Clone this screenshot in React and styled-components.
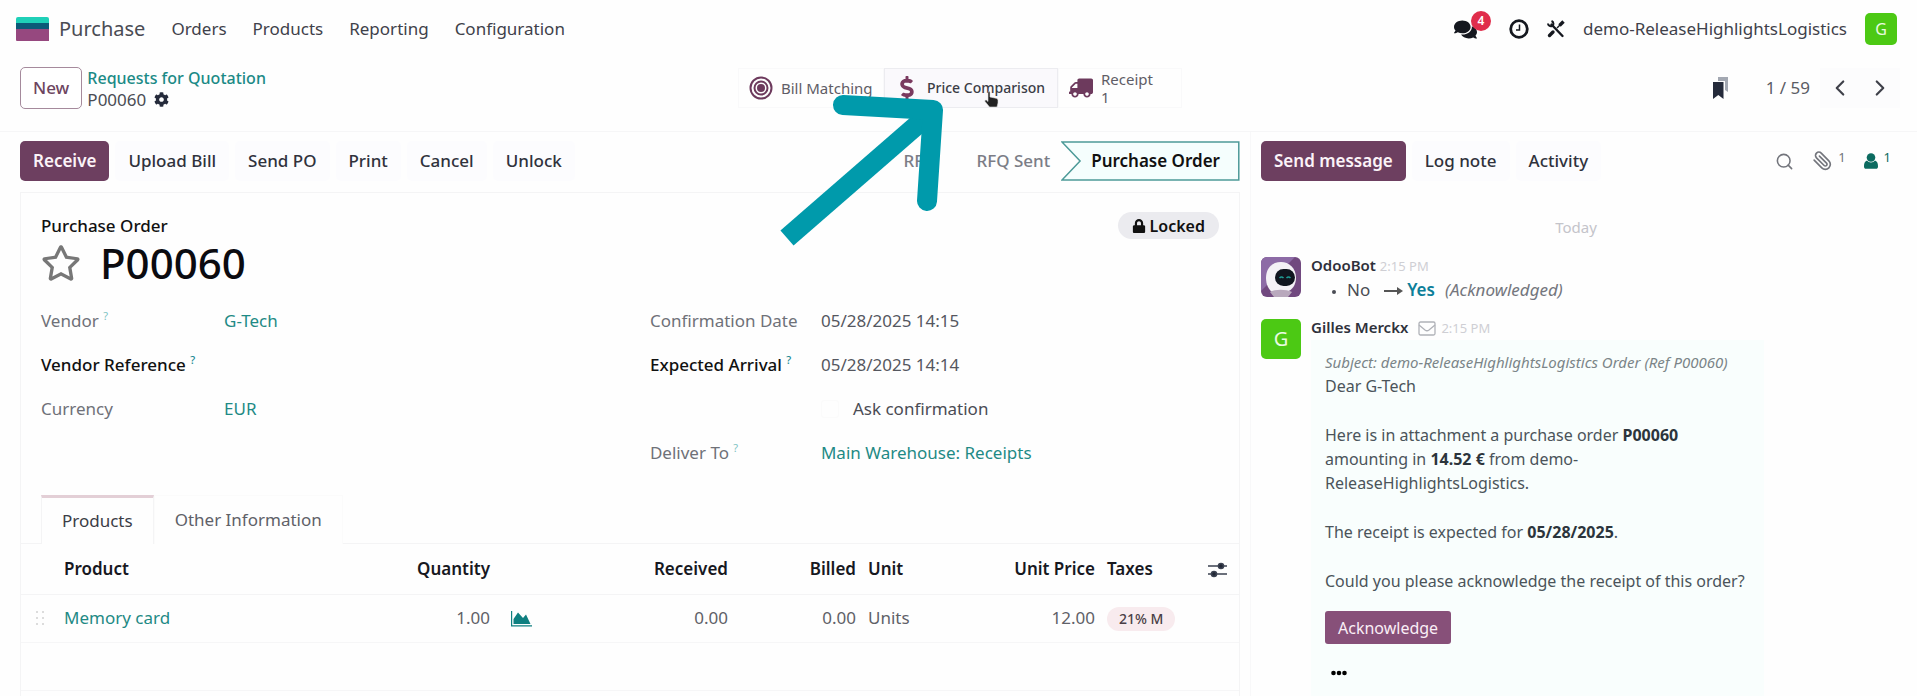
import React from 'react';
import styled, { createGlobalStyle } from 'styled-components';
import { FaComments, FaCog, FaTruck, FaDollarSign, FaLock, FaRegStar } from 'react-icons/fa';
import { FiSearch, FiPaperclip, FiChevronLeft, FiChevronRight } from 'react-icons/fi';

const lines = [
  { product: 'Memory card', qty: '1.00', received: '0.00', billed: '0.00', unit: 'Units', price: '12.00', tax: '21% M' },
];

export default function App() {
  return (
    <Page>
      <GlobalStyle />
      <Navbar />
      <ControlPanel />
      <Content>
        <FormView />
        <Chatter />
      </Content>
      <PointerArrow />
    </Page>
  );
}

function Navbar() {
  return (
    <NavWrapper>
      <Brand href="#purchase">
        <svg width="33" height="24" viewBox="0 0 33 24" aria-hidden="true">
          <path d="M2 0h29a2 2 0 0 1 2 2v5H0V2a2 2 0 0 1 2-2z" fill="#1fd0b8" />
          <rect y="6" width="33" height="7" fill="#0b5a78" />
          <path d="M0 12h33v12H1a1 1 0 0 1-1-1z" fill="#96487f" />
        </svg>
        Purchase
      </Brand>
      <Menu>
        <MenuLink href="#orders">Orders</MenuLink>
        <MenuLink href="#products">Products</MenuLink>
        <MenuLink href="#reporting">Reporting</MenuLink>
        <MenuLink href="#configuration">Configuration</MenuLink>
      </Menu>
      <Systray>
        <MessagesButton aria-label="Messages">
          <FaComments size={23} />
          <Counter>4</Counter>
        </MessagesButton>
        <IconButton aria-label="Activities">
          <svg width="20" height="20" viewBox="0 0 20 20" fill="none" stroke="currentColor">
            <circle cx="10" cy="10" r="8.300" strokeWidth="2.800" />
            <path d="M10.500 5.500v5.500H7" strokeWidth="1.500" />
          </svg>
        </IconButton>
        <IconButton aria-label="Developer tools">
          <svg width="18" height="18" viewBox="0 0 18 18" fill="none" stroke="currentColor">
            <path d="M4.500 4.500L15.500 16" strokeWidth="2.400" strokeLinecap="round" />
            <path d="M1 3.500c0 2 2 3 4 2.500s2-4-.5-5" strokeWidth="2" />
            <path d="M2.500 15.500L6 12" strokeWidth="3.400" strokeLinecap="round" />
            <path d="M10 8l3-3" strokeWidth="1.500" />
            <path d="M12.500 5.500L16.500 1.500" strokeWidth="3.400" />
          </svg>
        </IconButton>
        <UserName>demo-ReleaseHighlightsLogistics</UserName>
        <Avatar $size={32}>G</Avatar>
      </Systray>
    </NavWrapper>
  );
}

function ControlPanel() {
  return (
    <PanelWrapper>
      <PanelSide>
        <NewButton>New</NewButton>
        <Breadcrumb>
          <CrumbLink href="#rfq">Requests for Quotation</CrumbLink>
          <Current>
            P00060
            <IconButton aria-label="Actions">
              <FaCog size={15} />
            </IconButton>
          </Current>
        </Breadcrumb>
      </PanelSide>
      <StatButtons>
        <StatButton $width={146}>
          <svg width="24" height="24" viewBox="0 0 24 24" fill="none" stroke="#6d3a5d" strokeWidth="2">
            <circle cx="12" cy="12" r="10.500" />
            <circle cx="12" cy="12" r="6.500" />
            <circle cx="12" cy="12" r="3" fill="#6d3a5d" />
          </svg>
          Bill Matching
        </StatButton>
        <StatButton $width={174} $active>
          <FaDollarSign size={24} color="#7a3a5f" />
          Price Comparison
          <HandCursor width="15" height="17" viewBox="0 0 15 17">
            <path
              d="M4 1.500c0-1.200 2-1.200 2 0V6l6 1.200c1.300.3 2 1 2 2.300V12l-1 4H5.500L1 10.500c-.6-1 .7-2 1.700-1.200L4 10.500z"
              fill="#222"
              stroke="#ddd"
              strokeWidth=".6"
            />
          </HandCursor>
        </StatButton>
        <StatButton $width={124}>
          <TruckIcon size={24} />
          <span>
            Receipt
            <br />1
          </span>
        </StatButton>
      </StatButtons>
      <PanelSide $end>
        <IconButton aria-label="Bookmarks">
          <svg width="17" height="22" viewBox="0 0 17 22">
            <path d="M6 0h10v15l-3-2V4H6z" fill="#a3a8b2" />
            <path d="M1 5h10.500v17L6.300 18 1 22z" fill="#252b3b" />
          </svg>
        </IconButton>
        <Pager>
          <span>1 / 59</span>
          <PagerButton aria-label="Previous">
            <FiChevronLeft size={26} />
          </PagerButton>
          <PagerButton aria-label="Next">
            <FiChevronRight size={26} />
          </PagerButton>
        </Pager>
      </PanelSide>
    </PanelWrapper>
  );
}

function FormView() {
  return (
    <FormColumn>
      <ActionBar>
        <Button $primary>Receive</Button>
        <Button>Upload Bill</Button>
        <Button>Send PO</Button>
        <Button>Print</Button>
        <Button>Cancel</Button>
        <Button>Unlock</Button>
        <StatusBar>
          <Stage>RFQ</Stage>
          <Stage>RFQ Sent</Stage>
          <CurrentStage>
            <StageShape viewBox="0 0 178 40" preserveAspectRatio="none" aria-hidden="true">
              <path d="M1 1h176v38H1l18-19z" fill="#f5fefd" stroke="#4d9a98" strokeWidth="1.500" />
            </StageShape>
            <StageLabel>Purchase Order</StageLabel>
          </CurrentStage>
        </StatusBar>
      </ActionBar>
      <Sheet>
        <SheetTop>
          <DocType>Purchase Order</DocType>
          <Locked>
            <FaLock size={14} />
            Locked
          </Locked>
        </SheetTop>
        <TitleRow>
          <StarButton aria-label="Priority">
            <FaRegStar size={40} />
          </StarButton>
          <Title>P00060</Title>
        </TitleRow>
        <Groups>
          <Group $label={183}>
            <Label>Vendor <Help>?</Help></Label>
            <Value><FieldLink href="#vendor">G-Tech</FieldLink></Value>
            <Label $strong>Vendor Reference <Help $strong>?</Help></Label>
            <Value />
            <Label>Currency</Label>
            <Value><FieldLink href="#currency">EUR</FieldLink></Value>
          </Group>
          <Group $label={171}>
            <Label>Confirmation Date</Label>
            <Value>05/28/2025 14:15</Value>
            <Label $strong>Expected Arrival <Help $strong>?</Help></Label>
            <Value>05/28/2025 14:14</Value>
            <span />
            <CheckLabel>
              <Checkbox type="checkbox" />
              Ask confirmation
            </CheckLabel>
            <Label>Deliver To <Help>?</Help></Label>
            <Value><FieldLink href="#warehouse">Main Warehouse: Receipts</FieldLink></Value>
          </Group>
        </Groups>
        <Tabs role="tablist">
          <Tab role="tab" aria-selected="true" $active>Products</Tab>
          <Tab role="tab" aria-selected="false">Other Information</Tab>
        </Tabs>
        <OrderTable />
      </Sheet>
    </FormColumn>
  );
}

function OrderTable() {
  return (
    <Table>
      <colgroup>
        <Col $width={37} />
        <col />
        <Col $width={120} />
        <Col $width={50} />
        <Col $width={188} />
        <Col $width={128} />
        <Col $width={118} />
        <Col $width={121} />
        <Col $width={101} />
        <Col $width={37} />
      </colgroup>
      <thead>
        <tr>
          <Th />
          <Th>Product</Th>
          <Th $right>Quantity</Th>
          <Th />
          <Th $right>Received</Th>
          <Th $right>Billed</Th>
          <Th>Unit</Th>
          <Th $right>Unit Price</Th>
          <Th>Taxes</Th>
          <Th>
            <IconButton aria-label="Optional columns">
              <svg width="19" height="18" viewBox="0 0 19 18" stroke="#3b4150" strokeWidth="1.600" fill="#1f2533">
                <path d="M0 5h19M0 13h19" />
                <circle cx="13" cy="5" r="2.500" />
                <circle cx="6" cy="13" r="2.500" />
              </svg>
            </IconButton>
          </Th>
        </tr>
      </thead>
      <tbody>
        {lines.map((line) => (
          <tr key={line.product}>
            <Td $center>
              <svg width="10" height="16" viewBox="0 0 10 16" fill="#dcdcdc" aria-hidden="true">
                <path d="M1 0h2v2H1zM7 0h2v2H7zM1 6h2v2H1zM7 6h2v2H7zM1 12h2v2H1zM7 12h2v2H7z" />
              </svg>
            </Td>
            <Td><FieldLink href="#product">{line.product}</FieldLink></Td>
            <Td $right>{line.qty}</Td>
            <Td $center>
              <IconButton aria-label="Forecast" $color="#0f7f80">
                <svg width="21" height="16" viewBox="0 0 21 16" fill="currentColor">
                  <path d="M0 0h1.200v14.300H21v1.200H0z" />
                  <path d="M2.500 13V8L7 1.500 12 7l3-3.500L19.500 13z" />
                </svg>
              </IconButton>
            </Td>
            <Td $right>{line.received}</Td>
            <Td $right>{line.billed}</Td>
            <Td>{line.unit}</Td>
            <Td $right>{line.price}</Td>
            <Td><Tag>{line.tax}</Tag></Td>
            <Td />
          </tr>
        ))}
        <tr>
          <Td colSpan={10} />
        </tr>
      </tbody>
    </Table>
  );
}

function Chatter() {
  return (
    <ChatterColumn>
      <ActionBar>
        <Button $primary>Send message</Button>
        <Button>Log note</Button>
        <Button>Activity</Button>
        <ChatterTools>
          <IconButton aria-label="Search messages"><FiSearch size={19} /></IconButton>
          <IconButton aria-label="Attachments"><ClipIcon size={20} /><sup>1</sup></IconButton>
          <IconButton aria-label="Followers" $color="#0c6b60">
            <svg width="14" height="16" viewBox="0 0 14 16" fill="currentColor">
              <circle cx="7" cy="4.500" r="4.300" />
              <path d="M3 7.500c2 2.500 6 2.500 8 0 2.500.8 3 3.500 3 6 0 1.500-.8 2.300-2 2.300H2c-1.200 0-2-.8-2-2.300 0-2.500.5-5.200 3-6z" />
            </svg>
            <sup>1</sup>
          </IconButton>
        </ChatterTools>
      </ActionBar>
      <Today>Today</Today>
      <Message>
        <BotAvatar viewBox="0 0 40 40" role="img" aria-label="OdooBot">
          <rect width="40" height="40" rx="6" fill="#71497f" />
          <path d="M0 6a6 6 0 0 1 6-6h28L0 34z" fill="#8d6ba6" />
          <path d="M5 21C5 10 12 5 20 5s15 6 15 16c0 7-4 12-9 14l-14 1C8 33 5 28 5 21z" fill="#f4f1f6" />
          <path d="M9 35c5-3 16-3 22 0l-4 5H13z" fill="#b9a9bd" />
          <rect x="14" y="12" width="20" height="17" rx="8.500" fill="#10151f" />
          <path d="M18.500 21q2-2 4 0M25.500 21q2-2 4 0" stroke="#1f9c95" strokeWidth="1.500" fill="none" />
        </BotAvatar>
        <MessageBody>
          <Author>OdooBot <Time>2:15 PM</Time></Author>
          <Tracking>
            <li>
              <span>No</span>
              <svg width="19" height="10" viewBox="0 0 19 10" fill="#555" aria-hidden="true">
                <path d="M0 4h13V1l6 4-6 4V6H0z" />
              </svg>
              <NewValue>Yes</NewValue>
              <i>(Acknowledged)</i>
            </li>
          </Tracking>
        </MessageBody>
      </Message>
      <Message>
        <Avatar $size={40}>G</Avatar>
        <MessageBody>
          <Author>
            Gilles Merckx
            <svg width="18" height="15" viewBox="0 0 18 15" fill="none" stroke="currentColor" strokeWidth="1.300" aria-hidden="true">
              <rect x="1" y="1" width="16" height="13" rx="1.500" />
              <path d="M1 4l6 5q2 1.500 4 0l6-5" />
            </svg>
            <Time>2:15 PM</Time>
          </Author>
          <Bubble>
            <Subject>Subject: demo-ReleaseHighlightsLogistics Order (Ref P00060)</Subject>
            <p>Dear G-Tech</p>
            <p>
              Here is in attachment a purchase order <b>P00060</b>
              <br />
              amounting in <b>14.52 €</b> from demo-
              <br />
              ReleaseHighlightsLogistics.
            </p>
            <p>The receipt is expected for <b>05/28/2025</b>.</p>
            <p>Could you please acknowledge the receipt of this order?</p>
            <AckButton>Acknowledge</AckButton>
            <MoreButton aria-label="More">
              <svg width="16" height="6" viewBox="0 0 16 6">
                <circle cx="2.500" cy="3" r="2.300" />
                <circle cx="8" cy="3" r="2.300" />
                <circle cx="13.500" cy="3" r="2.300" />
              </svg>
            </MoreButton>
          </Bubble>
        </MessageBody>
      </Message>
    </ChatterColumn>
  );
}

// big callout that lies over the page and points to Price Comparison
function PointerArrow() {
  return (
    <Callout viewBox="0 0 163 152" fill="none" stroke="#009aab" strokeWidth="20" aria-hidden="true">
      <path d="M7 144L152 18" />
      <path d="M63 11l90 5-6 91" strokeLinecap="round" strokeLinejoin="round" />
    </Callout>
  );
}

const GlobalStyle = createGlobalStyle`
*{
    box-sizing:border-box;
}
body{
    margin:0;
    background:#fefefe;
    color:#4a4c54;
    font-family:"Noto Sans","Open Sans",sans-serif;
    font-size:17px;
    line-height:24px;
}
button{
    font:inherit;
    cursor:pointer;
}
a{
    text-decoration:none;
}
`;

const Page = styled.div`
position:relative;
display:flex;
flex-direction:column;
min-height:100vh;
overflow:hidden;
`;

const NavWrapper = styled.header`
display:flex;
align-items:center;
height:58px;
padding:0 20px 0 16px;
`;

const Brand = styled.a`
display:flex;
align-items:center;
gap:10px;
color:#4a4c54;
font-size:20px;
`;

const Menu = styled.nav`
display:flex;
gap:26px;
margin-left:26px;
`;

const MenuLink = styled.a`
color:#3f414a;
`;

const Systray = styled.div`
display:flex;
align-items:center;
gap:18px;
margin-left:auto;
color:#15181f;
`;

const IconButton = styled.button`
position:relative;
display:inline-flex;
align-items:center;
padding:0;
border:0;
background:none;
color:${(props) => props.$color || 'inherit'};
vertical-align:middle;
sup{
    margin:-8px 0 0 6px;
    font-size:13px;
    line-height:12px;
}
`;

const MessagesButton = styled(IconButton)`
margin-right:14px;
`;

const Counter = styled.span`
position:absolute;
top:-7px;
right:-14px;
width:20px;
height:20px;
border-radius:50%;
background:#e02d4b;
color:#fff;
font-size:12px;
font-weight:600;
line-height:20px;
text-align:center;
`;

const UserName = styled.span`
color:#3f414a;
`;

const Avatar = styled.div`
flex:none;
display:flex;
align-items:center;
justify-content:center;
width:${(props) => props.$size}px;
height:${(props) => props.$size}px;
border-radius:5px;
background:#4cc914;
color:#e9fbe0;
font-size:${(props) => (props.$size > 32 ? 20 : 16)}px;
`;

const PanelWrapper = styled.div`
display:grid;
grid-template-columns:1fr auto 1fr;
align-items:center;
height:74px;
padding:0 17px 14px 20px;
border-bottom:1px solid #f6f6f7;
`;

const PanelSide = styled.div`
display:flex;
align-items:center;
justify-content:${(props) => (props.$end ? 'flex-end' : 'flex-start')};
gap:${(props) => (props.$end ? 37 : 5)}px;
`;

const NewButton = styled.button`
height:42px;
padding:0 12px;
border:1px solid #a58a9c;
border-radius:5px;
background:#fff;
color:#6d4560;
font-weight:500;
`;

const Breadcrumb = styled.div`
padding-top:2px;
line-height:21px;
`;

const CrumbLink = styled.a`
display:block;
color:#1b8a86;
font-size:16px;
font-weight:500;
`;

const Current = styled.div`
display:flex;
gap:8px;
color:#4a4c54;
svg{
    color:#252b3b;
}
`;

const StatButtons = styled.div`
display:flex;
`;

const StatButton = styled.button`
position:relative;
display:flex;
align-items:center;
gap:8px;
width:${(props) => props.$width}px;
height:40px;
padding:0 10px;
border:1px solid ${(props) => (props.$active ? '#ececf0' : '#f9f9fa')};
background:${(props) => (props.$active ? '#faf9fc' : '#fefefe')};
color:${(props) => (props.$active ? '#3b3d46' : '#5f5d66')};
font-size:${(props) => (props.$active ? 14 : 15)}px;
font-weight:${(props) => (props.$active ? 500 : 400)};
line-height:18px;
text-align:left;
white-space:nowrap;
svg{
    flex:none;
}
`;

const HandCursor = styled.svg`
position:absolute;
top:22px;
left:99px;
`;

const TruckIcon = styled(FaTruck)`
color:#6d3a5d;
transform:scaleX(-1);
`;

const Pager = styled.div`
display:flex;
align-items:center;
color:#5a5c64;
span{
    margin-right:10px;
}
`;

const PagerButton = styled.button`
display:flex;
align-items:center;
justify-content:center;
width:40px;
height:40px;
padding:0;
border:0;
background:#fcfcfd;
color:#3f414a;
`;

const Content = styled.main`
flex:1;
display:grid;
grid-template-columns:1251fr 666fr;
`;

const FormColumn = styled.section`
display:flex;
flex-direction:column;
padding:9px 10px 0 20px;
border-right:1px solid #f8f8f9;
`;

const ActionBar = styled.div`
display:flex;
align-items:center;
gap:6px;
height:40px;
`;

const Button = styled.button`
height:40px;
padding:0 13px;
border:0;
border-radius:5px;
background:${(props) => (props.$primary ? '#6d3f60' : '#fcfcfe')};
color:${(props) => (props.$primary ? '#fbf3f8' : '#30323c')};
font-weight:${(props) => (props.$primary ? 600 : 500)};
white-space:nowrap;
`;

const StatusBar = styled.div`
display:flex;
align-items:center;
height:40px;
margin-left:auto;
`;

const Stage = styled.span`
padding:0 11px 0 29px;
color:#7b7d86;
font-weight:500;
`;

const CurrentStage = styled.div`
position:relative;
padding:8px 20px 8px 30px;
color:#111;
font-weight:600;
`;

const StageShape = styled.svg`
position:absolute;
inset:0;
width:100%;
height:100%;
`;

const StageLabel = styled.span`
position:relative;
`;

const Sheet = styled.div`
flex:1;
margin-top:11px;
border:1px solid #f4f4f5;
border-bottom:0;
`;

const SheetTop = styled.div`
display:flex;
align-items:center;
justify-content:space-between;
padding:19px 20px 0;
`;

const DocType = styled.span`
color:#111;
font-weight:500;
`;

const Locked = styled.span`
display:flex;
align-items:center;
gap:4px;
height:27px;
padding:0 14px;
border-radius:14px;
background:#ebebef;
color:#111;
font-size:16px;
font-weight:600;
`;

const TitleRow = styled.div`
display:flex;
align-items:center;
gap:19px;
height:48px;
padding-left:20px;
`;

const StarButton = styled.button`
display:flex;
padding:0;
border:0;
background:none;
color:#777;
`;

const Title = styled.h1`
margin:0;
color:#0b0b10;
font-size:42px;
font-weight:500;
line-height:48px;
`;

const Groups = styled.div`
display:grid;
grid-template-columns:610fr 570fr;
padding:12px 20px 0;
`;

const Group = styled.div`
display:grid;
grid-template-columns:${(props) => props.$label}px 1fr;
grid-auto-rows:44px;
align-content:start;
align-items:center;
`;

const Label = styled.label`
color:${(props) => (props.$strong ? '#111' : '#6f7178')};
font-weight:${(props) => (props.$strong ? 500 : 400)};
`;

const Help = styled.sup`
color:${(props) => (props.$strong ? '#1b8a96' : '#7fc4c4')};
font-size:11px;
line-height:12px;
`;

const Value = styled.span`
color:#55575f;
`;

const FieldLink = styled.a`
color:#1f8a85;
`;

const CheckLabel = styled.label`
display:flex;
align-items:center;
gap:14px;
`;

const Checkbox = styled.input`
appearance:none;
width:18px;
height:18px;
margin:0;
border:1px solid #fbfbfb;
border-radius:3px;
`;

const Tabs = styled.div`
display:flex;
margin-top:20px;
padding-left:20px;
border-bottom:1px solid #f4f4f5;
`;

const Tab = styled.button`
height:49px;
margin-bottom:-1px;
padding:0 20px;
border:1px solid ${(props) => (props.$active ? '#f4f4f5' : '#fbfbfb')};
border-top:${(props) => (props.$active ? '3px solid #e3cfd6' : '1px solid #fbfbfb')};
border-bottom:0;
background:#fefefe;
color:${(props) => (props.$active ? '#3b3d46' : '#5f6168')};
`;

const Table = styled.table`
width:100%;
table-layout:fixed;
border-collapse:collapse;
`;

const Col = styled.col`
width:${(props) => props.$width}px;
`;

const Th = styled.th`
height:50px;
padding:0 6px;
border-bottom:1px solid #f4f4f5;
color:#17181f;
font-weight:600;
text-align:${(props) => (props.$right ? 'right' : 'left')};
`;

const Td = styled.td`
height:48px;
padding:0 6px;
border-bottom:1px solid #f6f6f7;
color:#5f6168;
text-align:${(props) => (props.$right ? 'right' : props.$center ? 'center' : 'left')};
svg{
    vertical-align:middle;
}
`;

const Tag = styled.span`
display:inline-block;
padding:0 12px;
border-radius:12px;
background:#f8ebee;
color:#4a3f46;
font-size:14px;
font-weight:500;
vertical-align:middle;
`;

const ChatterColumn = styled.aside`
display:flex;
flex-direction:column;
padding:9px 26px 0 10px;
`;

const ChatterTools = styled.div`
display:flex;
align-items:center;
gap:18px;
margin-left:auto;
color:#73757c;
`;

const ClipIcon = styled(FiPaperclip)`
transform:scaleX(-1);
`;

const Today = styled.div`
margin:34px 0 18px;
color:#c4c4ca;
font-size:15px;
text-align:center;
`;

const Message = styled.article`
display:flex;
align-items:flex-start;
gap:10px;
margin-bottom:17px;
&:last-child{
    flex:1;
    margin-bottom:0;
}
`;

const BotAvatar = styled.svg`
flex:none;
width:40px;
height:40px;
`;

const MessageBody = styled.div`
display:flex;
flex-direction:column;
align-self:stretch;
margin-top:-4px;
`;

const Author = styled.div`
color:#2f313b;
font-size:15px;
font-weight:600;
svg{
    margin:0 5px 0 10px;
    color:#b0b2b8;
    vertical-align:middle;
}
`;

const Time = styled.time`
color:#cfcfd4;
font-size:13px;
font-weight:400;
`;

const Tracking = styled.ul`
margin:0;
padding-left:36px;
li::marker{
    font-size:12px;
}
li span{
    margin-right:14px;
}
i{
    color:#74767d;
}
`;

const NewValue = styled.b`
margin:0 10px 0 4px;
color:#0d7f99;
font-weight:600;
`;

const Bubble = styled.div`
flex:1;
width:453px;
padding:10px 14px;
background:#f9fefd;
color:#4b545a;
font-size:16px;
p{
    margin:0 0 25px;
}
p:last-of-type{
    margin-bottom:18px;
}
b{
    color:#2c353c;
}
`;

const Subject = styled.em`
display:block;
color:#7b8588;
font-size:15px;
`;

const AckButton = styled.button`
display:block;
height:33px;
padding:0 13px;
border:0;
border-radius:3px;
background:#875079;
color:#faeef6;
`;

const MoreButton = styled.button`
display:flex;
margin-top:26px;
padding:0 6px;
border:0;
background:none;
`;

const Callout = styled.svg`
position:absolute;
top:94px;
left:780px;
width:163px;
height:152px;
pointer-events:none;
`;
